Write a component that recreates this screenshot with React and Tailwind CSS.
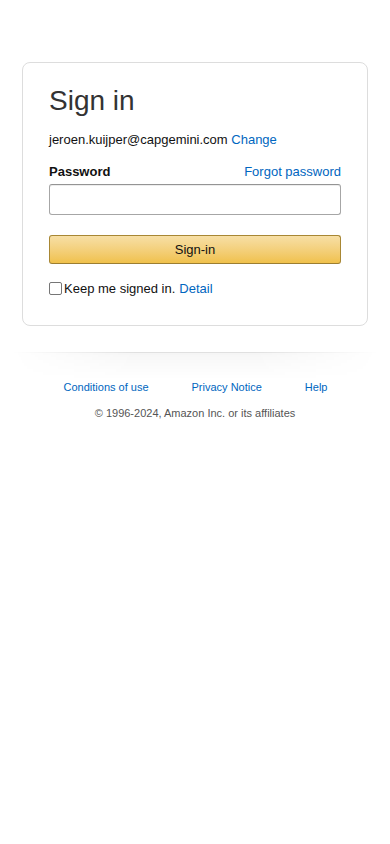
import React from 'react';

export default function App() {
  return (
    <div className="min-h-[844px] bg-white pt-[62px] text-[#111] font-['Liberation_Sans',Arial,sans-serif]">
      <div className="mx-[22px] rounded-[8px] border border-[#dddddd] px-[26px] pt-[20px] pb-[27px]">
        <h1 className="text-[28px] leading-[36px] font-normal text-[#333]">Sign in</h1>

        <div className="mt-[11px] text-[13px] leading-[19px] text-[#111]">
          jeroen.kuijper@capgemini.com <a className="text-[#0066c0]">Change</a>
        </div>

        <div className="mt-[13px] flex items-center justify-between text-[13px] leading-[19px]">
          <span className="font-bold text-[#111]">Password</span>
          <a className="text-[#0066c0]">Forgot password</a>
        </div>
        <input
          type="password"
          className="mt-[3px] block h-[31px] w-full rounded-[3px] border border-[#a6a6a6] border-t-[#949494] bg-white px-[7px] text-[13px] outline-none shadow-[0_1px_0_rgba(255,255,255,0.5),0_1px_0_rgba(0,0,0,0.07)_inset]"
        />

        <button className="mt-[20px] block h-[29px] w-full rounded-[3px] border border-[#a88734] border-b-[#9c7e31] bg-gradient-to-b from-[#f7dfa5] to-[#f0c14b] text-[13px] leading-[27px] text-[#111]">
          Sign-in
        </button>

        <div className="mt-[15px] flex items-center text-[13px] leading-[19px]">
          <span className="mr-[2px] inline-block h-[13px] w-[13px] rounded-[2px] border border-[#767676] bg-white" />
          <span className="text-[#111]">Keep me signed in.</span>
          <a className="ml-[4px] text-[#0066c0]">Detail</a>
        </div>
      </div>

      <div className="mt-[26px] h-[28px] [mask-image:linear-gradient(to_right,transparent_3%,black_35%,black_65%,transparent_97%)]">
        <div className="h-[1px] bg-[rgba(0,0,0,0.12)]" />
        <div className="h-[2px] bg-[rgba(0,0,0,0.04)]" />
        <div className="h-[25px] bg-gradient-to-b from-[rgba(0,0,0,0.03)] to-transparent" />
      </div>

      <div className="flex justify-center gap-[43px] pl-[1px] text-[11px] leading-[14px] text-[#0066c0]">
        <a>Conditions of use</a>
        <a>Privacy Notice</a>
        <a>Help</a>
      </div>
      <div className="mt-[12px] text-center text-[11px] leading-[14px] text-[#555]">
        © 1996-2024, Amazon Inc. or its affiliates
      </div>
    </div>
  );
}
